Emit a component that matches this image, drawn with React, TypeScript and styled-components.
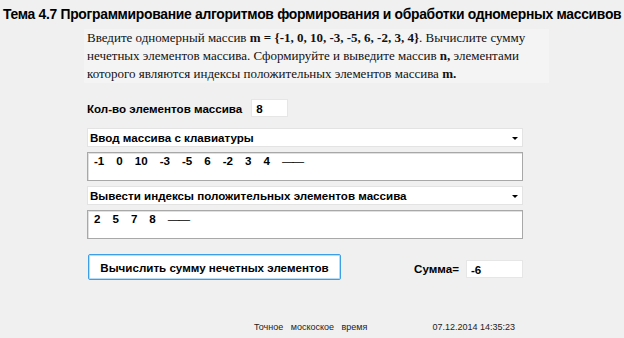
import React from 'react';
import styled, { createGlobalStyle } from 'styled-components';

const GlobalStyle = createGlobalStyle`
  html, body {
    margin: 0;
    padding: 0;
    background: #f0f0f0;
  }
  body {
    width: 624px;
    height: 338px;
    overflow: hidden;
  }
`;

const Page = styled.div`
  display: flex;
  flex-direction: column;
  width: 624px;
  height: 338px;
  background: #f0f0f0;
  font-family: 'Liberation Sans', Arial, sans-serif;
  color: #000;
`;

const Title = styled.h1`
  margin: 0;
  padding: 5px 0 0 3px;
  font-size: 13.9px;
  font-weight: bold;
  line-height: 18px;
  letter-spacing: -0.3px;
  white-space: nowrap;
`;

const Content = styled.div`
  display: flex;
  flex-direction: column;
  margin-left: 87px;
  width: 436px;
`;

const Task = styled.p`
  margin: 6px 0 0 -3px;
  padding: 0 0 0 3px;
  width: 462px;
  background: #f4f4f4;
  font-family: 'Liberation Serif', 'Times New Roman', serif;
  font-size: 13px;
  line-height: 18px;
  color: #111;
`;

const CountRow = styled.div`
  display: flex;
  align-items: center;
  gap: 9px;
  margin-top: 16px;
`;

const Label = styled.span`
  font-size: 11.6px;
  font-weight: bold;
  white-space: nowrap;
`;

const Field = styled.div<{ $width: number }>`
  box-sizing: border-box;
  width: ${(p) => p.$width}px;
  height: 18px;
  padding: 2px 4px;
  background: #fff;
  border: 1px solid #e6e6e6;
  font-size: 11.6px;
  font-weight: bold;
  line-height: 13px;
`;

const Select = styled.div<{ $top: number }>`
  box-sizing: border-box;
  display: flex;
  align-items: center;
  justify-content: space-between;
  height: 19px;
  margin-top: ${(p) => p.$top}px;
  padding: 0 4px 0 2px;
  background: #fff;
  border: 1px solid #e3e3e3;
  font-size: 11.6px;
  font-weight: bold;
`;

const Arrow = styled.span`
  width: 0;
  height: 0;
  border-left: 3px solid transparent;
  border-right: 3px solid transparent;
  border-top: 3px solid #000;
  margin-top: 2px;
`;

const TextBox = styled.div<{ $gap: number }>`
  box-sizing: border-box;
  display: flex;
  gap: ${(p) => p.$gap}px;
  height: 29px;
  margin-top: 5px;
  padding: 1px 6px;
  background: #fff;
  border: 1px solid #a8a8a8;
  box-shadow: inset 1px 1px 0 #e0e0e0;
  font-size: 11.6px;
  font-weight: bold;
  line-height: 14px;
`;

const Dash = styled.span`
  font-weight: normal;
  letter-spacing: -1px;
`;

const ActionRow = styled.div`
  display: flex;
  align-items: center;
  margin-top: 15px;
`;

const Button = styled.button`
  box-sizing: border-box;
  width: 253px;
  height: 26px;
  margin-left: 1px;
  background: #fff;
  border: 1px solid #3c9ee6;
  box-shadow: inset 0 0 0 1px #b7dcf7;
  border-radius: 2px;
  font-family: 'Liberation Sans', Arial, sans-serif;
  font-size: 11.6px;
  font-weight: bold;
  color: #000;
  padding: 0;
`;

const SumGroup = styled.div`
  display: flex;
  align-items: center;
  gap: 7px;
  margin-left: auto;
  margin-top: 3px;
`;

const Footer = styled.div`
  display: flex;
  margin: 42px 0 0 254px;
  font-size: 9px;
  color: #222;
`;

const FooterText = styled.span`
  word-spacing: 5px;
`;

const Clock = styled.span`
  margin-left: 65px;
`;

const source = ['-1', '0', '10', '-3', '-5', '6', '-2', '3', '4'];
const result = ['2', '5', '7', '8'];

const App: React.FC = () => {
  return (
    <Page>
      <GlobalStyle />
      <Title>Тема 4.7 Программирование алгоритмов формирования и обработки одномерных массивов</Title>
      <Content>
        <Task>
          Введите одномерный массив <b>m = {'{'}-1, 0, 10, -3, -5, 6, -2, 3, 4{'}'}</b>. Вычислите сумму
          нечетных элементов массива. Сформируйте и выведите массив <b>n,</b> элементами
          которого являются индексы положительных элементов массива <b>m.</b>
        </Task>
        <CountRow>
          <Label>Кол-во элементов массива</Label>
          <Field $width={37}>8</Field>
        </CountRow>
        <Select $top={11}>
          Ввод массива с клавиатуры
          <Arrow />
        </Select>
        <TextBox $gap={12}>
          {source.map((n, i) => (
            <span key={i}>{n}</span>
          ))}
          <Dash>——</Dash>
        </TextBox>
        <Select $top={5}>
          Вывести индексы положительных элементов массива
          <Arrow />
        </Select>
        <TextBox $gap={12}>
          {result.map((n, i) => (
            <span key={i}>{n}</span>
          ))}
          <Dash>——</Dash>
        </TextBox>
        <ActionRow>
          <Button>Вычислить сумму нечетных элементов</Button>
          <SumGroup>
            <Label>Сумма=</Label>
            <Field $width={57}>-6</Field>
          </SumGroup>
        </ActionRow>
      </Content>
      <Footer>
        <FooterText>Точное москоское время</FooterText>
        <Clock>07.12.2014 14:35:23</Clock>
      </Footer>
    </Page>
  );
};

export default App;
